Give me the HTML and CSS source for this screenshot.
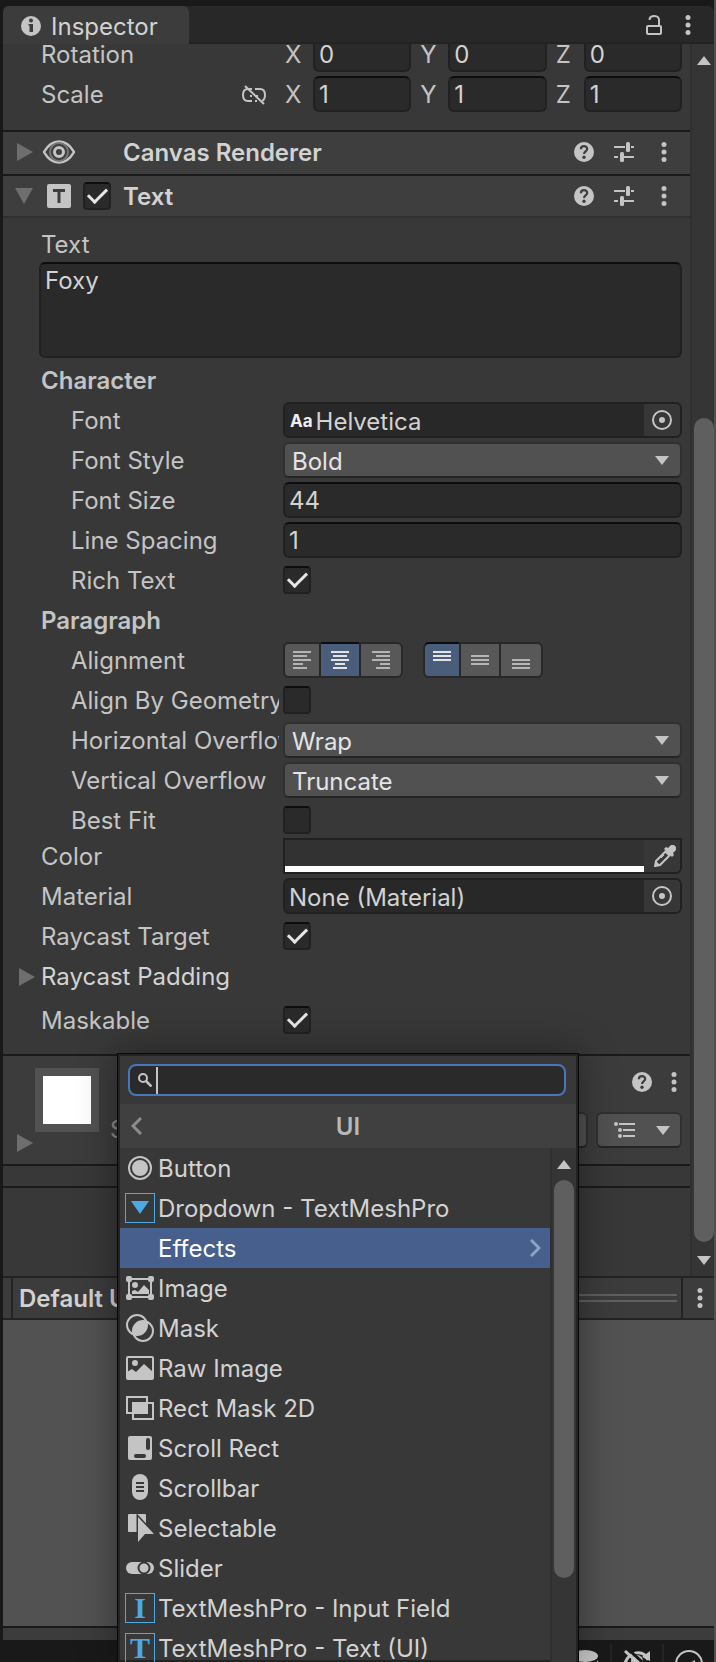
FILE: index.html
```html
<!DOCTYPE html>
<html lang="en">
<head>
<meta charset="utf-8">
<meta name="viewport" content="width=device-width, initial-scale=1">
<title>Inspector</title>
<link rel="stylesheet" href="styles.css">
</head>
<body>
<svg class="sprite" aria-hidden="true">
  <symbol id="kebab" viewBox="0 0 6 20"><circle cx="3" cy="2.5" r="2.5"/><circle cx="3" cy="10" r="2.5"/><circle cx="3" cy="17.5" r="2.5"/></symbol>
  <symbol id="help" viewBox="0 0 20 20"><circle cx="10" cy="10" r="10"/><path d="M6.9 7.2C6.9 5.2 8.2 4.2 10 4.2s3.200 1 3.200 2.800c0 2-3.100 2.300-3.100 4.900" fill="none" stroke="#3e3e3e" stroke-width="2.200"/><circle cx="10" cy="15.300" r="1.700" fill="#3e3e3e"/></symbol>
  <symbol id="preset" viewBox="0 0 20 20"><path d="M0 4h11v2H0zM17 4h3v2h-3zM0 14h4v2H0zM9 14h11v2H9z"/><rect x="12" y="0" width="4" height="10" rx="1.500"/><rect x="6" y="10" width="4" height="10" rx="1.500"/></symbol>
  <symbol id="right" viewBox="0 0 16 18"><path d="M0 0l16 9-16 9z"/></symbol>
  <symbol id="down" viewBox="0 0 14 9"><path d="M0 0h14L7 9z"/></symbol>
  <symbol id="up" viewBox="0 0 14 9"><path d="M0 9h14L7 0z"/></symbol>
  <symbol id="pick" viewBox="0 0 20 20"><circle cx="10" cy="10" r="9" fill="none" stroke="currentColor" stroke-width="2"/><circle cx="10" cy="10" r="3"/></symbol>
</svg>

<div class="app">
  <header class="tabs">
    <div class="tab">
      <svg width="20" height="20" viewBox="0 0 20 20"><circle cx="10" cy="10" r="10"/><circle cx="10" cy="4.500" r="2" fill="#3c3c3c"/><path d="M7.500 8H12v8H8.500V9.500h-1z" fill="#3c3c3c"/></svg>
      <span>Inspector</span>
    </div>
    <div class="tab-tools">
      <button class="icon" aria-label="Lock"><svg width="16" height="20" viewBox="0 0 16 20"><rect x="1" y="11" width="14" height="8" rx="1" fill="none" stroke="currentColor" stroke-width="2"/><path d="M3.500 5C3.500 2.500 5.500 1 8.500 1S13 3 13 5v6" fill="none" stroke="currentColor" stroke-width="2"/></svg></button>
      <button class="icon" aria-label="Tab menu"><svg width="6" height="20"><use href="#kebab"/></svg></button>
    </div>
  </header>

  <div class="scroller">
    <main class="content">
      <section class="transform">
        <div class="clip">
          <div class="row">
            <span class="label">Rotation</span>
            <div class="vector">
              <label>X<input class="field" value="0"></label>
              <label>Y<input class="field" value="0"></label>
              <label>Z<input class="field" value="0"></label>
            </div>
          </div>
        </div>
        <div class="row">
          <span class="label with-icon">Scale
            <svg class="line" width="26" height="20" viewBox="0 0 26 20" stroke-width="2"><path d="M11 4H7C3.500 4 2 6.500 2 10s1.500 6 5 6h4M14 4h5c3.500 0 5 2.500 5 6 0 3-1 5-3 6M14 16h2M9 11h2M14 11h3"/><path d="M4 1l19 18"/></svg>
          </span>
          <div class="vector">
            <label>X<input class="field" value="1"></label>
            <label>Y<input class="field" value="1"></label>
            <label>Z<input class="field" value="1"></label>
          </div>
        </div>
      </section>

      <header class="component">
        <svg class="fold" width="16" height="18"><use href="#right"/></svg>
        <svg class="eye line" width="32" height="24" viewBox="0 0 32 24"><path d="M1 12C9-2 23-2 31 12 23 26 9 26 1 12z" stroke-width="2.500"/><circle cx="16" cy="12" r="9" stroke="#777" stroke-width="2"/><circle cx="16" cy="12" r="4.500" stroke-width="3"/></svg>
        <h2>Canvas Renderer</h2>
        <div class="tools">
          <button class="icon" aria-label="Help"><svg width="20" height="20"><use href="#help"/></svg></button>
          <button class="icon" aria-label="Presets"><svg width="20" height="20"><use href="#preset"/></svg></button>
          <button class="icon" aria-label="More"><svg width="20" height="20"><use href="#kebab"/></svg></button>
        </div>
      </header>
      <header class="component open">
        <svg class="fold" width="18" height="16" viewBox="0 0 18 16"><path d="M0 0h18L9 16z"/></svg>
        <svg class="t-icon" width="24" height="24" viewBox="0 0 24 24"><rect width="24" height="24" rx="2"/><path d="M6 5h12v3h-4.500v11h-3V8H6z" fill="#3e3e3e"/></svg>
        <input type="checkbox" class="check" checked aria-label="Enable Text">
        <h2>Text</h2>
        <div class="tools">
          <button class="icon" aria-label="Help"><svg width="20" height="20"><use href="#help"/></svg></button>
          <button class="icon" aria-label="Presets"><svg width="20" height="20"><use href="#preset"/></svg></button>
          <button class="icon" aria-label="More"><svg width="20" height="20"><use href="#kebab"/></svg></button>
        </div>
      </header>

      <section class="fields">
        <div class="row"><label class="label" for="text">Text</label></div>
        <textarea class="field" id="text">Foxy</textarea>

        <h3>Character</h3>
        <div class="row sub"><label class="label" for="font">Font</label>
          <div class="object"><span class="aa">Aa</span><input id="font" value="Helvetica" readonly><button aria-label="Pick font"><svg width="20" height="20"><use href="#pick"/></svg></button></div></div>
        <div class="row sub"><label class="label" for="style">Font Style</label>
          <div class="drop"><select id="style"><option>Bold</option></select><svg width="14" height="9"><use href="#down"/></svg></div></div>
        <div class="row sub"><label class="label" for="size">Font Size</label><input class="field" id="size" value="44"></div>
        <div class="row sub"><label class="label" for="spacing">Line Spacing</label><input class="field" id="spacing" value="1"></div>
        <div class="row sub"><label class="label" for="rich">Rich Text</label><input type="checkbox" class="check" id="rich" checked></div>

        <h3>Paragraph</h3>
        <div class="row sub"><span class="label">Alignment</span>
          <div class="aligns">
            <div class="segments">
              <button aria-label="Left"><svg width="18" height="18"><path d="M0 0h18v2H0zM0 4h14v2H0zM0 8h18v2H0zM0 12h10v2H0zM0 16h14v2H0z"/></svg></button>
              <button class="on" aria-label="Center"><svg width="18" height="18"><path d="M0 0h18v2H0zM2 4h14v2H2zM0 8h18v2H0zM4 12h10v2H4zM2 16h14v2H2z"/></svg></button>
              <button aria-label="Right"><svg width="18" height="18"><path d="M0 0h18v2H0zM4 4h14v2H4zM0 8h18v2H0zM8 12h10v2H8zM4 16h14v2H4z"/></svg></button>
            </div>
            <div class="segments">
              <button class="on" aria-label="Top"><svg width="18" height="18"><path d="M0 0h18v2H0zM0 4h18v2H0zM0 8h18v2H0z"/></svg></button>
              <button aria-label="Middle"><svg width="18" height="18"><path d="M0 4h18v2H0zM0 8h18v2H0zM0 12h18v2H0z"/></svg></button>
              <button aria-label="Bottom"><svg width="18" height="18"><path d="M0 8h18v2H0zM0 12h18v2H0zM0 16h18v2H0z"/></svg></button>
            </div>
          </div></div>
        <div class="row sub"><label class="label" for="geo">Align By Geometry</label><input type="checkbox" class="check" id="geo"></div>
        <div class="row sub"><label class="label" for="hov">Horizontal Overflow</label>
          <div class="drop"><select id="hov"><option>Wrap</option></select><svg width="14" height="9"><use href="#down"/></svg></div></div>
        <div class="row sub"><label class="label" for="vov">Vertical Overflow</label>
          <div class="drop"><select id="vov"><option>Truncate</option></select><svg width="14" height="9"><use href="#down"/></svg></div></div>
        <div class="row sub"><label class="label" for="fit">Best Fit</label><input type="checkbox" class="check" id="fit"></div>

        <div class="row color-row"><span class="label">Color</span>
          <div class="object color"><button class="swatch" aria-label="Color"></button><button class="dropper" aria-label="Pick color"><svg width="22" height="22" viewBox="0 0 22 22"><path d="M14 3l3-3h3l2 2v3l-3 3 1 2-2 2-8-8 2-2z"/><path d="M11.500 6.500l4 4L6 20l-5 1 1-5z" fill="none" stroke="currentColor" stroke-width="2"/><path d="M1 21l1-5 4 4z"/><path d="M7 13l3-3" stroke="currentColor"/></svg></button></div></div>
        <div class="row"><label class="label" for="mat">Material</label>
          <div class="object"><input id="mat" value="None (Material)" readonly><button aria-label="Pick material"><svg width="20" height="20"><use href="#pick"/></svg></button></div></div>
        <div class="row"><label class="label" for="ray">Raycast Target</label><input type="checkbox" class="check" id="ray" checked></div>
        <div class="row foldout"><span class="label bright"><svg class="fold" width="16" height="18"><use href="#right"/></svg>Raycast Padding</span></div>
        <div class="row mask-row"><label class="label" for="mask">Maskable</label><input type="checkbox" class="check" id="mask" checked></div>
      </section>

      <section class="material">
        <div class="thumb-col">
          <div class="thumb"></div>
          <svg class="fold" width="16" height="18"><use href="#right"/></svg>
        </div>
        <div class="mat-col">
          <div class="mat-tools">
            <button class="icon" aria-label="Help"><svg width="20" height="20"><use href="#help"/></svg></button>
            <button class="icon" aria-label="More"><svg width="6" height="20"><use href="#kebab"/></svg></button>
          </div>
          <div class="shader">
            <label for="shader">Shader</label>
            <div class="drop"><select id="shader"><option>UI/Default</option></select></div>
            <button class="list-btn" aria-label="Shader list">
              <svg width="22" height="18" viewBox="0 0 22 18"><circle cx="2" cy="3" r="2"/><path d="M5 2h16v2H5zM9 8h12v2H9zM9 14h12v2H9z"/><circle cx="6" cy="9" r="2"/><circle cx="6" cy="15" r="2"/></svg>
              <svg width="14" height="9"><use href="#down"/></svg>
            </button>
          </div>
        </div>
      </section>
      <div class="strip"></div>
    </main>
    <div class="scrollbar">
      <button aria-label="Scroll up"><svg width="14" height="9"><use href="#up"/></svg></button>
      <div class="thumb-bar main-thumb"></div>
      <button aria-label="Scroll down"><svg width="14" height="9"><use href="#down"/></svg></button>
    </div>
  </div>

  <header class="preview-head">
    <span class="edge"></span>
    <h2>Default UI Material</h2>
    <span class="grip"></span>
    <button class="icon" aria-label="Preview menu"><svg width="6" height="20"><use href="#kebab"/></svg></button>
  </header>
  <div class="preview"></div>
  <div class="foot"></div>
  <footer class="status">
    <button class="icon" aria-label="Cache"><svg width="28" height="28" viewBox="0 0 28 28"><ellipse cx="14" cy="6" rx="13" ry="6"/><path d="M1 10c2 6 24 6 26 0v6H1z"/></svg></button>
    <button class="icon" aria-label="Hidden"><svg width="28" height="28" viewBox="0 0 28 28"><path d="M2 13C6 2 20-2 25 10" fill="none" stroke="currentColor" stroke-width="3"/><path d="M27 1v10l-8-4z"/><circle cx="14" cy="11" r="6"/><path d="M6 0l22 20" stroke="#191919" stroke-width="3"/><path d="M2 1l24 22" stroke="currentColor" stroke-width="3"/></svg></button>
    <button class="icon" aria-label="Activity"><svg width="28" height="28" viewBox="0 0 28 28"><circle cx="14" cy="14" r="13" fill="none" stroke="currentColor" stroke-width="2"/><path d="M13 14l7-4v5z"/></svg></button>
  </footer>

  <div class="popup" role="dialog" aria-label="Add component">
    <div class="search">
      <svg class="line" width="14" height="14" viewBox="0 0 14 14" stroke-width="2"><circle cx="5" cy="5" r="4"/><path d="M8 8l5.500 5.500" stroke-width="2.500"/></svg>
      <span class="caret"></span>
      <input type="text" aria-label="Search">
    </div>
    <div class="pop-title">
      <button class="icon" aria-label="Back"><svg class="line" width="11" height="18" viewBox="0 0 11 18" stroke-width="3"><path d="M10 1L2 9l8 8"/></svg></button>
      <h2>UI</h2>
    </div>
    <div class="pop-body">
      <ul>
        <li><button><svg viewBox="0 0 32 32"><circle cx="16" cy="16" r="11" fill="none" stroke="currentColor" stroke-width="2"/><circle cx="16" cy="16" r="8"/></svg><span>Button</span></button></li>
        <li><button><svg class="blue" viewBox="0 0 32 32"><rect x="1.500" y="1.500" width="29" height="29" fill="none" stroke="currentColor"/><path d="M7 9h18l-9 13z"/></svg><span>Dropdown - TextMeshPro</span></button></li>
        <li><button class="selected"><svg viewBox="0 0 32 32"></svg><span>Effects</span><svg class="next line" viewBox="0 0 11 18" stroke-width="3"><path d="M1 1l8 8-8 8"/></svg></button></li>
        <li><button><svg viewBox="0 0 32 32"><path d="M5 7h22v18H5z" fill="none" stroke="currentColor" stroke-width="2"/><rect x="2" y="4" width="6" height="6" rx="2"/><rect x="24" y="4" width="6" height="6" rx="2"/><rect x="2" y="22" width="6" height="6" rx="2"/><rect x="24" y="22" width="6" height="6" rx="2"/><circle cx="11" cy="13" r="3"/><path d="M8 19l3-1 3 2 6-7 5 5v4H8z"/></svg><span>Image</span></button></li>
        <li><button><svg viewBox="0 0 32 32"><circle cx="13" cy="13" r="10" fill="none" stroke="currentColor" stroke-width="2"/><circle cx="19" cy="19" r="10" fill="none" stroke="currentColor" stroke-width="2"/><path d="M22.400 9.600A10 10 0 0 1 9.600 22.400 10 10 0 0 1 22.400 9.600z"/></svg><span>Mask</span></button></li>
        <li><button><svg viewBox="0 0 32 32"><rect x="3" y="5" width="26" height="22" rx="1" fill="none" stroke="currentColor" stroke-width="2"/><circle cx="11" cy="11" r="3"/><path d="M3 20l5-3 4 3 8-8 9 8v7H3z"/></svg><span>Raw Image</span></button></li>
        <li><button><svg viewBox="0 0 32 32"><path d="M3 5h20v16H3zM9 11h20v16H9z" fill="none" stroke="currentColor" stroke-width="2"/><path d="M9 11h14v10H9z"/></svg><span>Rect Mask 2D</span></button></li>
        <li><button><svg viewBox="0 0 32 32"><rect x="4" y="4" width="24" height="24" rx="2"/><rect x="22" y="6" width="4" height="12" rx="2" fill="#383838"/><rect x="10" y="22" width="12" height="4" rx="2" fill="#383838"/></svg><span>Scroll Rect</span></button></li>
        <li><button><svg viewBox="0 0 32 32"><rect x="8" y="2" width="16" height="26" rx="8"/><path d="M12 10h8v2h-8zM12 14h8v2h-8zM12 18h8v2h-8z" fill="#383838"/></svg><span>Scrollbar</span></button></li>
        <li><button><svg viewBox="0 0 32 32"><rect x="4" y="2" width="18" height="18" rx="1"/><path d="M14 5l16 17h-9l-7 8z" stroke="#383838" stroke-width="3"/><path d="M14 5l16 17h-9l-7 8z"/></svg><span>Selectable</span></button></li>
        <li><button><svg viewBox="0 0 32 32"><rect x="2" y="10" width="28" height="12" rx="6"/><circle cx="20" cy="16" r="5.500" stroke="#383838" stroke-width="2"/></svg><span>Slider</span></button></li>
        <li><button><svg class="blue" viewBox="0 0 32 32"><rect x="1.500" y="1.500" width="29" height="29" fill="none" stroke="currentColor"/><text class="serif" x="16" y="26" text-anchor="middle">I</text></svg><span>TextMeshPro - Input Field</span></button></li>
        <li><button><svg class="blue" viewBox="0 0 32 32"><rect x="1.500" y="1.500" width="29" height="29" fill="none" stroke="currentColor"/><text class="serif" x="16" y="26" text-anchor="middle">T</text></svg><span>TextMeshPro - Text (UI)</span></button></li>
      </ul>
      <div class="scrollbar">
        <button aria-label="Scroll up"><svg width="14" height="9"><use href="#up"/></svg></button>
        <div class="thumb-bar pop-thumb"></div>
      </div>
    </div>
  </div>
</div>
</body>
</html>
```
FILE: styles.css
```css
* { box-sizing: border-box; }

body {
  margin: 0;
  background: #191919;
  color: #c4c4c4;
  font: 24px/36px Inter, "Liberation Sans", sans-serif;
}

h2, h3 { margin: 0; font-size: 24px; font-weight: 600; line-height: 36px; }
h2 { padding-top: 2px; color: #d2d2d2; white-space: nowrap; }
svg { display: block; flex: none; fill: currentColor; }
.line { fill: none; stroke: currentColor; }
.sprite { position: absolute; width: 0; height: 0; }

button, input, select, textarea { font: inherit; color: inherit; margin: 0; }
button { padding: 0; border: 0; background: none; display: flex; align-items: center; justify-content: center; }
input, select, textarea { min-width: 0; width: 100%; outline: none; }

.app {
  position: relative;
  display: flex;
  flex-direction: column;
  min-height: 100vh;
  overflow: hidden;
  padding: 6px 0 0 3px;
  border-right: 2px solid #505050;
}

/* Tab bar */
.tabs { display: flex; justify-content: space-between; height: 38px; background: #282828; border-radius: 6px 6px 0 0; box-shadow: inset 0 -2px #232323; }
.tab { display: flex; align-items: center; gap: 10px; width: 186px; padding: 2px 0 0 18px; background: #3c3c3c; border-radius: 6px 6px 0 0; color: #d2d2d2; }
.tab span { padding-top: 2px; }
.tab svg { color: #c4c4c4; }
.tab-tools { display: flex; align-items: center; gap: 23px; padding-right: 23px; }

/* Scrolling area */
.scroller { display: flex; background: #383838; }
.content { flex: 1; min-width: 0; }
.scrollbar { display: flex; flex-direction: column; width: 24px; padding-left: 2px; background: #353535; border-left: 2px solid #303030; }
.scrollbar button { height: 32px; flex: none; }
.thumb-bar { background: #5f5f5f; border-radius: 10px; }
.main-thumb { flex: 1; margin: 342px 0 2px; }

.row { display: grid; grid-template-columns: 238px 1fr; gap: 4px; align-items: center; height: 36px; padding: 0 8px 0 38px; }
.row.sub .label { padding-left: 30px; }
.label { overflow: hidden; white-space: nowrap; line-height: 34px; padding-top: 2px; }
.label.bright { color: #d2d2d2; }
.with-icon { display: flex; align-items: center; justify-content: space-between; padding-right: 12px; }

.transform { display: flex; flex-direction: column; gap: 4px; padding-bottom: 18px; }
.clip { display: flex; flex-direction: column; justify-content: flex-end; height: 28px; overflow: hidden; }
.clip .row { flex: none; }
.vector { display: flex; gap: 7px; }
.vector label { flex: 1; display: grid; grid-template-columns: 28px 1fr; padding-left: 2px; line-height: 38px; height: 36px; }

.field { height: 36px; padding: 2px 4px 0; background: #2a2a2a; border: 2px solid #212121; border-top-color: #0d0d0d; border-radius: 6px; color: #d2d2d2; }
textarea.field { display: block; width: auto; height: 96px; margin: -4px 8px 0 36px; padding: 0 4px; line-height: 34px; resize: none; }

.check { appearance: none; width: 28px; height: 28px; display: grid; place-items: center; background: #2a2a2a; border: 2px solid #212121; border-top-color: #0d0d0d; border-radius: 4px; }
.check:checked::after { content: ""; width: 16px; height: 8px; margin-bottom: 5px; border: solid #e6e6e6; border-width: 0 0 3px 3px; transform: rotate(-45deg); }

/* Component headers */
.component { display: flex; align-items: center; height: 44px; padding: 0 16px 2px 14px; background: #3e3e3e; border-top: 2px solid #1a1a1a; }
.component.open { padding: 0 16px 0 12px; border-bottom: 2px solid #303030; }
.fold { color: #6e6e6e; }
.eye { margin: 0 48px 0 10px; }
.t-icon { margin: 0 12px 0 14px; }
.component .check { margin-right: 12px; }
.tools { display: flex; gap: 20px; margin-left: auto; }

/* Text component */
.fields { display: flex; flex-direction: column; gap: 4px; padding: 8px 0 16px; }
.fields h3 { height: 36px; padding: 1px 0 0 38px; }
.object { display: flex; height: 36px; background: #282828; border: 2px solid #212121; border-radius: 6px; overflow: hidden; color: #d2d2d2; }
.object input { border: 0; background: none; padding: 3px 4px 0; }
.object button { flex: none; width: 36px; background: #373737; color: #c4c4c4; }
.aa { padding-left: 5px; font-size: 17px; font-weight: 700; line-height: 34px; color: #eee; }
.aa + input { padding-left: 3px; }
.drop { position: relative; }
.drop select { display: block; appearance: none; height: 36px; padding: 0 7px 2px; background: #515151; border: 2px solid #303030; border-bottom-color: #242424; border-radius: 6px; color: #e4e4e4; }
.drop svg { position: absolute; right: 13px; top: 14px; pointer-events: none; }
.aligns { display: flex; gap: 20px; }
.segments { display: grid; grid-template-columns: 34px 38px 40px; gap: 2px; height: 36px; padding: 2px; background: #282828; border-radius: 6px; }
.segments button { background: #585858; color: #b4b4b4; }
.segments button:first-child { border-radius: 4px 0 0 4px; }
.segments button:last-child { border-radius: 0 4px 4px 0; }
.segments .on { background: #4a5e7c; color: #e4e4e4; box-shadow: 0 -2px #0d0d0d; }
.color-row { margin-top: -4px; }
.color { border-radius: 0 0 6px 0; }
.object .swatch { flex: 1; background: #323232; border-bottom: 6px solid #fff; align-self: stretch; }
.object .dropper { padding-left: 5px; }
.foldout { grid-template-columns: 1fr; padding-left: 16px; }
.foldout .label { display: flex; align-items: center; gap: 6px; }
.mask-row { margin-top: 4px; }

/* Material block */
.material { display: flex; gap: 11px; height: 110px; padding: 12px 8px 0 14px; background: #3c3c3c; border-top: 2px solid #1a1a1a; }
.thumb { width: 64px; height: 64px; margin: 0 0 2px 18px; background: #fff; border: 8px solid #525252; }
.mat-col { flex: 1; display: flex; flex-direction: column; gap: 16px; }
.mat-tools { display: flex; align-items: center; justify-content: flex-end; gap: 19px; height: 28px; padding-right: 5px; }
.shader { display: flex; gap: 8px; color: #8a8a8a; }
.shader .drop { flex: 1; }
.list-btn { width: 86px; gap: 20px; padding-left: 6px; background: #515151; border: 2px solid #303030; border-bottom-color: #242424; border-radius: 6px; color: #c4c4c4; }
.strip { height: 24px; margin-bottom: 88px; border: solid #1a1a1a; border-width: 2px 0; }

/* Preview */
.preview-head { display: flex; align-items: center; height: 44px; background: #3c3c3c; border: solid #232323; border-width: 2px 0; }
.edge { align-self: stretch; width: 10px; margin-right: 6px; border-right: 2px solid #232323; }
.grip { flex: 1; height: 8px; margin: 0 4px 0 12px; border: solid #5f5f5f; border-width: 2px 0; }
.preview-head .icon { align-self: stretch; width: 33px; border-left: 2px solid #232323; padding-left: 3px; }
.preview { flex: 1; min-height: 306px; background: #525252; }
.foot { height: 14px; background: #3c3c3c; border-top: 2px solid #1a1a1a; }
.status { display: flex; justify-content: flex-end; height: 22px; padding: 4px 0 0; overflow: hidden; }
.status .icon { align-items: flex-start; width: 52px; padding-top: 6px; border-left: 2px solid #242424; }

/* Component menu */
.popup { position: absolute; top: 1053px; bottom: 0; left: 117px; right: 135px; display: flex; flex-direction: column; overflow: hidden; background: #383838; border: solid #080808; border-width: 1px 1px 0; box-shadow: inset 0 0 0 2px #232323, 0 0 36px rgba(0, 0, 0, .4); padding: 2px 2px 0; }
.search { display: flex; flex: none; align-items: center; gap: 4px; height: 32px; margin: 8px 10px 8px 8px; padding-left: 8px; background: #2a2a2a; border: 2px solid #4777b8; border-radius: 8px; }
.search input { border: 0; padding: 0; background: none; height: 28px; }
.caret { width: 2px; height: 27px; background: #c4c4c4; flex: none; }
.pop-title { display: grid; flex: none; grid-template-columns: 11px 1fr 11px; align-items: center; height: 44px; padding: 0 11px; background: #404040; color: #8c8c8c; }
.pop-title h2 { text-align: center; color: #b8b8b8; }
.pop-body { display: flex; flex: 1; min-height: 0; }
.pop-body ul { flex: 1; min-width: 0; margin: 0; padding: 0; list-style: none; color: #d2d2d2; }
.pop-body li button { width: 100%; height: 40px; gap: 2px; padding: 0 9px 0 4px; justify-content: flex-start; white-space: nowrap; }
.pop-body li span { padding-top: 2px; }
.pop-body li svg { width: 32px; height: 32px; color: #c4c4c4; }
.pop-body li .blue { color: #4ba9e6; }
.serif { font: 700 30px "Liberation Serif", serif; }
.pop-body .selected { background: #465f8c; color: #fff; }
.pop-body li .next { width: 11px; height: 18px; margin-left: auto; color: #8ea2c8; }
.pop-body .scrollbar { width: 26px; padding-right: 2px; }
.pop-thumb { height: 398px; }
```
